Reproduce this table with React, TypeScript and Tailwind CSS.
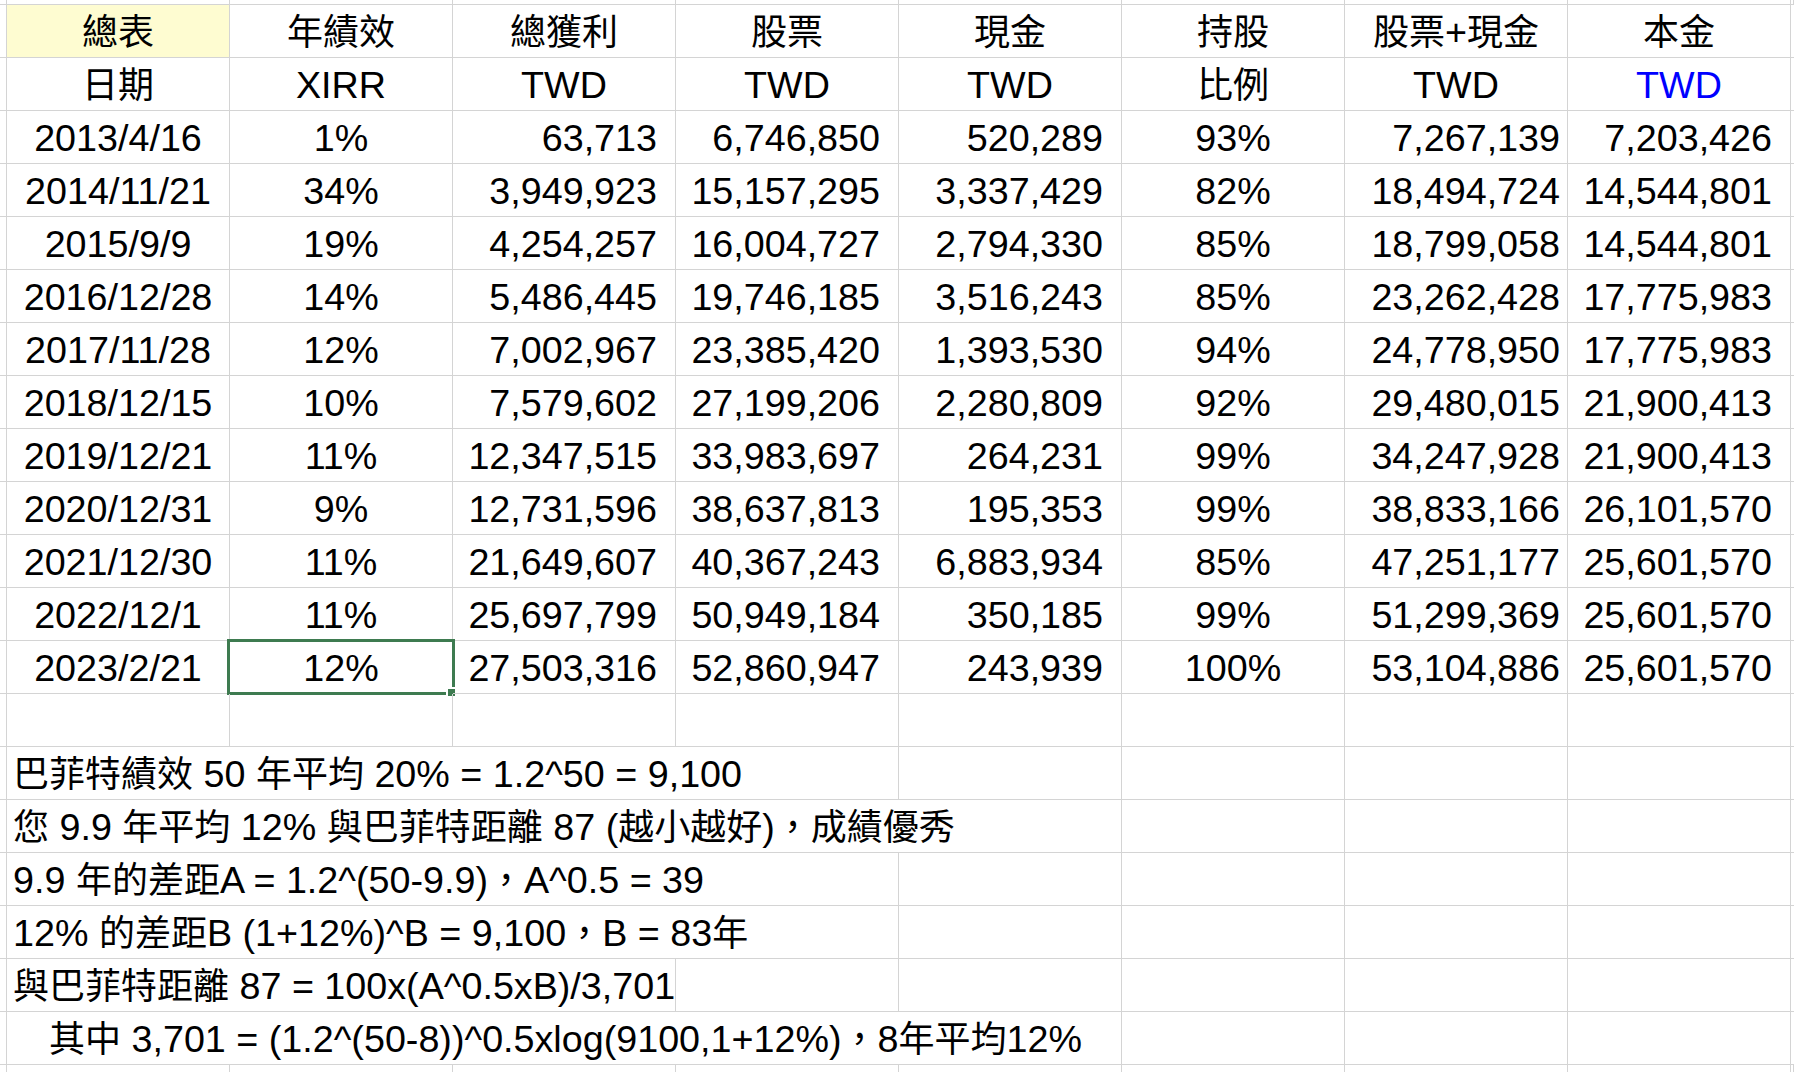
import clsx from 'clsx';

type Cell = {
  text?: string;
  align?: 'c' | 'r' | 'l';
  span?: 3 | 4 | 5;
  cls?: string;
  selected?: boolean;
};

const spanCls = { 3: 'col-span-3', 4: 'col-span-4', 5: 'col-span-5' };

const data = [
  ['2013/4/16', '1%', '63,713', '6,746,850', '520,289', '93%', '7,267,139', '7,203,426'],
  ['2014/11/21', '34%', '3,949,923', '15,157,295', '3,337,429', '82%', '18,494,724', '14,544,801'],
  ['2015/9/9', '19%', '4,254,257', '16,004,727', '2,794,330', '85%', '18,799,058', '14,544,801'],
  ['2016/12/28', '14%', '5,486,445', '19,746,185', '3,516,243', '85%', '23,262,428', '17,775,983'],
  ['2017/11/28', '12%', '7,002,967', '23,385,420', '1,393,530', '94%', '24,778,950', '17,775,983'],
  ['2018/12/15', '10%', '7,579,602', '27,199,206', '2,280,809', '92%', '29,480,015', '21,900,413'],
  ['2019/12/21', '11%', '12,347,515', '33,983,697', '264,231', '99%', '34,247,928', '21,900,413'],
  ['2020/12/31', '9%', '12,731,596', '38,637,813', '195,353', '99%', '38,833,166', '26,101,570'],
  ['2021/12/30', '11%', '21,649,607', '40,367,243', '6,883,934', '85%', '47,251,177', '25,601,570'],
  ['2022/12/1', '11%', '25,697,799', '50,949,184', '350,185', '99%', '51,299,369', '25,601,570'],
  ['2023/2/21', '12%', '27,503,316', '52,860,947', '243,939', '100%', '53,104,886', '25,601,570'],
];

// right padding differs a bit per column, like the sheet's number formats
const numPad = ['', '', 'pr-[18px]', 'pr-[18px]', 'pr-[18px]', '', 'pr-[7px]', 'pr-[18px]'];

const notes: [string, 3 | 4 | 5][] = [
  ['巴菲特績效 50 年平均 20% = 1.2^50 = 9,100', 4],
  ['您 9.9 年平均 12% 與巴菲特距離 87 (越小越好)，成績優秀', 5],
  ['9.9 年的差距A = 1.2^(50-9.9)，A^0.5 = 39', 4],
  ['12% 的差距B (1+12%)^B = 9,100，B = 83年', 4],
  ['與巴菲特距離 87 = 100x(A^0.5xB)/3,701', 3],
  ['　其中 3,701 = (1.2^(50-8))^0.5xlog(9100,1+12%)，8年平均12%', 5],
];

function buildRows(): Cell[][] {
  const rows: Cell[][] = [];
  rows.push(
    ['總表', '年績效', '總獲利', '股票', '現金', '持股', '股票+現金', '本金'].map((t, i) => ({
      text: t,
      align: 'c',
      cls: i === 0 ? 'bg-[#fefcd1]' : undefined,
    }))
  );
  rows.push(
    ['日期', 'XIRR', 'TWD', 'TWD', 'TWD', '比例', 'TWD', 'TWD'].map((t, i) => ({
      text: t,
      align: 'c',
      cls: i === 7 ? 'text-[#0000ff]' : undefined,
    }))
  );
  data.forEach((r, ri) => {
    rows.push(
      r.map((t, i) => ({
        text: t,
        align: i === 0 || i === 1 || i === 5 ? 'c' : 'r',
        cls: numPad[i],
        selected: ri === data.length - 1 && i === 1,
      }))
    );
  });
  rows.push(Array.from({ length: 8 }, () => ({})));
  notes.forEach(([t, span]) => {
    const row: Cell[] = [{ text: t, align: 'l', span, cls: 'pl-[6px]' }];
    for (let i = span; i < 8; i++) row.push({});
    rows.push(row);
  });
  return rows;
}

// CJK runs are set a touch smaller than the latin digits, like the sheet's font does
function Txt({ text }: { text: string }) {
  const parts = text.split(/([\u3000-\u9fff\uff00-\uffef]+)/);
  return (
    <>
      {parts.map((p, i) => {
        if (!p) return null;
        if (i % 2 === 0) return <span key={i}>{p}</span>;
        return (
          <span key={i} className="text-[36px]">
            {p}
          </span>
        );
      })}
    </>
  );
}

const line = 'border-[#d4d4d4]';

function SheetCell({ cell }: { cell: Cell }) {
  return (
    <div
      className={clsx(
        'relative border-r border-b whitespace-nowrap pt-[3px] leading-[49px]',
        line,
        cell.span && spanCls[cell.span],
        cell.align === 'c' && 'text-center',
        cell.align === 'r' && 'text-right',
        cell.align === 'l' && 'text-left',
        cell.cls
      )}
    >
      {cell.text && <Txt text={cell.text} />}
      {cell.selected && (
        <>
          <div className="absolute left-[-3px] top-[-2px] w-[228px] h-[56px] border-[3px] border-[#3e7b50]" />
          <div className="absolute left-[216px] top-[46px] w-[11px] h-[11px] border-2 border-white bg-[#3e7b50]" />
        </>
      )}
    </div>
  );
}

export default function App() {
  const rows = buildRows();
  return (
    <div
      lang="zh-Hant-TW"
      className="w-[1794px] h-[1072px] overflow-hidden bg-white text-black text-[37.7px] font-['Liberation_Sans','Noto_Sans_CJK_TC',sans-serif]"
    >
      <div className="grid grid-cols-[7px_repeat(8,223px)_1fr] grid-rows-[5px_repeat(20,53px)_7px]">
        {/* partial row above */}
        {Array.from({ length: 10 }, (_, i) => (
          <div key={'top' + i} className={clsx('border-r border-b', line)} />
        ))}
        {rows.map((row, ri) => (
          <div key={ri} className="contents">
            <div className={clsx('border-r border-b', line)} />
            {row.map((c, ci) => (
              <SheetCell key={ci} cell={c} />
            ))}
            <div className={clsx('border-b', line)} />
          </div>
        ))}
        {/* partial row below */}
        {Array.from({ length: 10 }, (_, i) => (
          <div key={'bot' + i} className={clsx('border-r', line)} />
        ))}
      </div>
    </div>
  );
}
